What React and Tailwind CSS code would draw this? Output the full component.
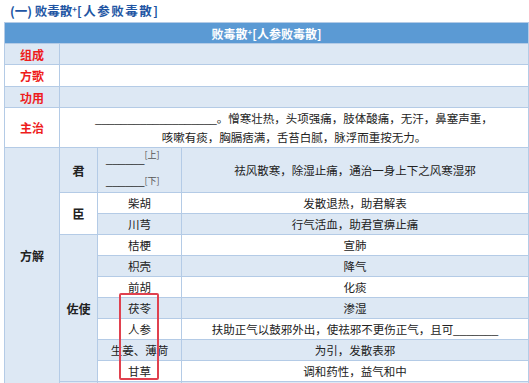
import React from 'react'

const font = { fontFamily: '"Noto Sans CJK SC", "Noto Sans", sans-serif' }

const herbs = [
  { name: '柴胡', use: '发散退热，助君解表', group: '臣' },
  { name: '川芎', use: '行气活血，助君宣痹止痛' },
  { name: '桔梗', use: '宣肺', group: '佐使' },
  { name: '枳壳', use: '降气' },
  { name: '前胡', use: '化痰' },
  { name: '茯苓', use: '渗湿' },
  { name: '人参', use: '扶助正气以鼓邪外出，使祛邪不更伤正气，且可', blank: true },
  { name: '生姜、薄荷', use: '为引，发散表邪' },
  { name: '甘草', use: '调和药性，益气和中' },
]

const Blank = ({ n }) => (
  <span className="font-['Liberation_Sans'] leading-[12px]">{'_'.repeat(n)}</span>
)

export default function App() {
  const cell = 'border border-[#b4cbe6] text-center align-middle p-0 whitespace-nowrap'
  const light = 'bg-[#dde8f4]'
  return (
    <div className="w-[529px] h-[383px] overflow-hidden bg-white text-[#222]" style={font}>
      <div className="pl-[10px] pt-[4px] h-[22px] text-[12.5px] font-bold leading-[14px] text-[#2155a3]">
        (一) 败毒散<sup className="text-[8px]">+</sup><span className="tracking-[1.5px]">[人参败毒散]</span>
      </div>
      <div className="relative ml-[4px] w-[524px]">
        <table className="w-[524px] min-w-[524px] table-fixed border-collapse text-[11.5px] leading-[13px]">
          <colgroup>
            <col className="w-[55px]" />
            <col className="w-[38px]" />
            <col className="w-[84px]" />
            <col className="w-[347px]" />
          </colgroup>
          <tbody>
            <tr className="h-[21px]">
              <td colSpan={4} className={`${cell} bg-[#5b9ad4] border-[#7fb0de] text-white font-bold text-[12px]`}>
                败毒散<sup className="text-[8px]">+</sup>[人参败毒散]
              </td>
            </tr>
            {['组成', '方歌', '功用'].map((t, i) => (
              <tr key={t} className={i === 1 ? 'h-[22px]' : 'h-[21px]'}>
                <td className={`${cell} ${i === 1 ? 'bg-white' : light} text-[#ee1c1c] font-bold text-[12px]`}>{t}</td>
                <td colSpan={3} className={`${cell} ${i === 1 ? 'bg-white' : light}`}></td>
              </tr>
            ))}
            <tr className="h-[40px]">
              <td className={`${cell} text-[#ee1c1c] font-bold text-[12px]`}>主治</td>
              <td colSpan={3} className={`${cell} leading-[19px]`}>
                <Blank n={19} />。憎寒壮热，头项强痛，肢体酸痛，无汗，鼻塞声重，
                <br />
                咳嗽有痰，胸膈痞满，舌苔白腻，脉浮而重按无力。
              </td>
            </tr>
            <tr className="h-[43px]">
              <td rowSpan={11} className={`${cell} ${light} !align-top pt-[101px] font-bold text-[12px]`}>方解</td>
              <td className={`${cell} ${light} font-bold text-[12px]`}>君</td>
              <td className={`${cell} ${light} leading-[21px]`}>
                <div className="pl-[8px] text-left">
                  <Blank n={6} /><span className="relative -top-[5px] text-[9px] text-[#555]">[上]</span>
                </div>
                <div className="pl-[8px] text-left">
                  <Blank n={6} /><span className="relative -top-[1px] text-[9px] text-[#555]">[下]</span>
                </div>
              </td>
              <td className={`${cell} ${light}`}>祛风散寒，除湿止痛，通治一身上下之风寒湿邪</td>
            </tr>
            {herbs.map((h, i) => {
              const bg = i % 2 === 0 ? 'bg-white' : light
              return (
                <tr key={h.name} className="h-[21px]">
                  {h.group === '臣' && (
                    <td rowSpan={2} className={`${cell} bg-white font-bold text-[12px]`}>臣</td>
                  )}
                  {h.group === '佐使' && (
                    <td rowSpan={7} className={`${cell} ${light} font-bold text-[12px]`}>佐使</td>
                  )}
                  <td className={`${cell} ${bg}`}>{h.name}</td>
                  <td className={`${cell} ${bg}`}>
                    {h.use}
                    {h.blank && <Blank n={7} />}
                  </td>
                </tr>
              )
            })}
            <tr className="h-[21px]">
              <td className={`${cell} ${light}`}></td>
              <td className={`${cell} ${light}`}></td>
              <td className={`${cell} ${light}`}></td>
            </tr>
          </tbody>
        </table>
        <div className="absolute left-[115px] top-[271px] w-[40px] h-[87px] border-2 border-[#e0414f] rounded-[2px] pointer-events-none"></div>
      </div>
    </div>
  )
}
